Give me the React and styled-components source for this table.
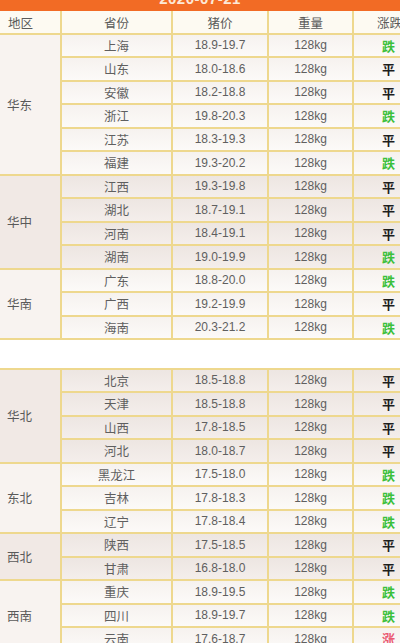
import React from "react";
import styled, { createGlobalStyle } from "styled-components";

const GlobalStyle = createGlobalStyle`
  html, body {
    margin: 0;
    padding: 0;
    background: #ffffff;
    overflow: hidden;
  }
  body {
    font-family: "Liberation Sans", "Noto Sans CJK SC", sans-serif;
    color: #555;
  }
`;

const Page = styled.div`
  width: 400px;
  height: 643px;
  overflow: hidden;
`;

const DateBand = styled.div`
  height: 11px;
  background: #f26b25;
  overflow: hidden;
  display: flex;
  justify-content: center;
  align-items: flex-end;
`;

const DateText = styled.span`
  color: #fde9d8;
  font-size: 15px;
  font-weight: bold;
  line-height: 15px;
  margin-bottom: 5px;
  letter-spacing: 0.5px;
`;

const Grid = styled.div`
  display: grid;
  grid-template-columns: 60px 109px 94px 83px 72px;
  grid-auto-rows: 21.5px;
  gap: 2px;
  width: 426px;
  background: #eed88e;
  padding: ${(p) => (p.$top ? "0 0 2px" : "2px 0")};
  margin-top: ${(p) => (p.$top ? "0" : "27.5px")};
`;

const HeadCell = styled.div`
  height: 22px;
  background: #fdfaf2;
  display: flex;
  align-items: center;
  justify-content: ${(p) => (p.$indent ? "flex-start" : "center")};
  padding-left: ${(p) => p.$indent || 0}px;
  font-size: 12.5px;
  color: #5a5a5a;
`;

const RegionCell = styled.div`
  grid-row: span ${(p) => p.$span};
  background: ${(p) => (p.$dark ? "#f1e9e5" : "#f8f3f0")};
  display: flex;
  align-items: center;
  padding-left: 7px;
  font-size: 12.5px;
  color: #5a5a5a;
`;

const Cell = styled.div`
  background: ${(p) =>
    p.$dark
      ? "linear-gradient(#ede6e2, #f4eeeb)"
      : "linear-gradient(#f6f2ef, #fcfaf8)"};
  display: flex;
  align-items: center;
  justify-content: center;
  font-size: ${(p) => (p.$num ? "12px" : "12.5px")};
  color: #5f5f5f;
`;

const Trend = styled(Cell)`
  justify-content: flex-start;
  padding-left: 28px;
  font-weight: bold;
  font-size: 13px;
  color: ${(p) =>
    p.$kind === "跌" ? "#3cc03c" : p.$kind === "涨" ? "#ea5a72" : "#1e1e1e"};
`;

const tableOne = [
  {
    region: "华东",
    rows: [
      ["上海", "18.9-19.7", "跌"],
      ["山东", "18.0-18.6", "平"],
      ["安徽", "18.2-18.8", "平"],
      ["浙江", "19.8-20.3", "跌"],
      ["江苏", "18.3-19.3", "平"],
      ["福建", "19.3-20.2", "跌"],
    ],
  },
  {
    region: "华中",
    dark: true,
    rows: [
      ["江西", "19.3-19.8", "平"],
      ["湖北", "18.7-19.1", "平"],
      ["河南", "18.4-19.1", "平"],
      ["湖南", "19.0-19.9", "跌"],
    ],
  },
  {
    region: "华南",
    rows: [
      ["广东", "18.8-20.0", "跌"],
      ["广西", "19.2-19.9", "平"],
      ["海南", "20.3-21.2", "跌"],
    ],
  },
];

const tableTwo = [
  {
    region: "华北",
    dark: true,
    rows: [
      ["北京", "18.5-18.8", "平"],
      ["天津", "18.5-18.8", "平"],
      ["山西", "17.8-18.5", "平"],
      ["河北", "18.0-18.7", "平"],
    ],
  },
  {
    region: "东北",
    rows: [
      ["黑龙江", "17.5-18.0", "跌"],
      ["吉林", "17.8-18.3", "跌"],
      ["辽宁", "17.8-18.4", "跌"],
    ],
  },
  {
    region: "西北",
    dark: true,
    rows: [
      ["陕西", "17.5-18.5", "平"],
      ["甘肃", "16.8-18.0", "平"],
    ],
  },
  {
    region: "西南",
    rows: [
      ["重庆", "18.9-19.5", "跌"],
      ["四川", "18.9-19.7", "跌"],
      ["云南", "17.6-18.7", "涨"],
    ],
  },
];

const Groups = ({ groups }) =>
  groups.map((g) => (
    <React.Fragment key={g.region}>
      <RegionCell $span={g.rows.length} $dark={g.dark}>
        {g.region}
      </RegionCell>
      {g.rows.map(([prov, price, trend]) => (
        <React.Fragment key={prov}>
          <Cell $dark={g.dark}>{prov}</Cell>
          <Cell $dark={g.dark} $num>
            {price}
          </Cell>
          <Cell $dark={g.dark} $num>
            128kg
          </Cell>
          <Trend $dark={g.dark} $kind={trend}>
            {trend}
          </Trend>
        </React.Fragment>
      ))}
    </React.Fragment>
  ));

const App = () => (
  <Page>
    <GlobalStyle />
    <DateBand>
      <DateText>2020-07-21</DateText>
    </DateBand>
    <Grid $top>
      <HeadCell $indent={8}>地区</HeadCell>
      <HeadCell>省份</HeadCell>
      <HeadCell>猪价</HeadCell>
      <HeadCell>重量</HeadCell>
      <HeadCell $indent={23}>涨跌</HeadCell>
      <Groups groups={tableOne} />
    </Grid>
    <Grid>
      <Groups groups={tableTwo} />
    </Grid>
  </Page>
);

export default App;
